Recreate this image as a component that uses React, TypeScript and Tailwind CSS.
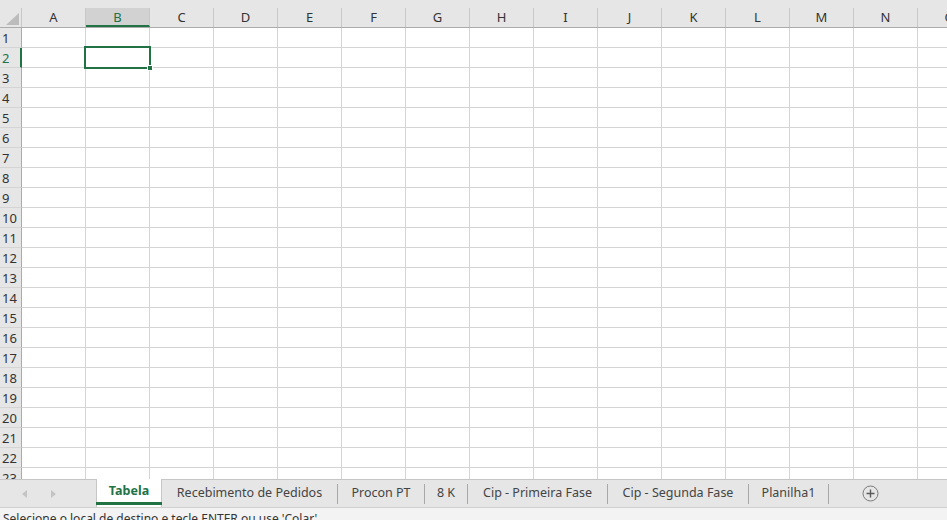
import React from "react";

const COLS = ["A", "B", "C", "D", "E", "F", "G", "H", "I", "J", "K", "L", "M", "N", "O"];
const ROWS = Array.from({ length: 23 }, (_, i) => i + 1);

const TABS: { label: string; w: string }[] = [
  { label: "Recebimento de Pedidos", w: "w-[176px]" },
  { label: "Procon PT", w: "w-[87px]" },
  { label: "8 K", w: "w-[43px]" },
  { label: "Cip - Primeira Fase", w: "w-[140px]" },
  { label: "Cip - Segunda Fase", w: "w-[141px]" },
  { label: "Planilha1", w: "w-[80px]" },
];

export default function App() {
  return (
    <div
      className="w-[947px] h-[520px] overflow-hidden bg-white flex flex-col"
      style={{ fontFamily: '"Noto Sans", "Open Sans", sans-serif' }}
    >
      {/* grid */}
      <div className="relative h-[479px] overflow-hidden shrink-0">
        {/* column header */}
        <div className="flex h-[28px] bg-[#e6e6e6] border-b border-[#ababab] pt-[8px] w-[1200px]">
          <div className="relative w-[22px] h-[19px] border-r border-[#c8c8c8] shrink-0">
            <svg className="absolute left-[6px] top-[5px]" width="13" height="12" viewBox="0 0 13 12">
              <polygon points="13,0 13,12 0,12" fill="#bcbcbc" />
            </svg>
          </div>
          {COLS.map((c) => {
            const sel = c === "B";
            return (
              <div
                key={c}
                className={
                  "w-[64px] h-[19px] shrink-0 border-r border-[#c8c8c8] flex items-center justify-center text-[13px] leading-none " +
                  (sel ? "bg-[#d2d2d2] text-[#217346] border-b-2 border-b-[#217346]" : "text-[#333]")
                }
              >
                <span className={sel ? "mt-[1px]" : ""}>{c}</span>
              </div>
            );
          })}
        </div>
        {/* rows */}
        {ROWS.map((r) => {
          const sel = r === 2;
          return (
            <div key={r} className="flex h-[20px] w-[1200px]">
              <div
                className={
                  "w-[22px] h-[20px] shrink-0 bg-[#e6e6e6] border-b border-[#d4d4d4] flex items-center pl-[2px] pt-[1px] text-[13px] leading-none " +
                  (sel ? "border-r-2 border-r-[#217346] bg-[#d2d2d2] text-[#217346]" : "border-r border-r-[#ababab] text-[#333]")
                }
              >
                {r}
              </div>
              {COLS.map((c) => (
                <div key={c} className="w-[64px] h-[20px] shrink-0 border-r border-b border-[#d4d4d4]" />
              ))}
            </div>
          );
        })}
        {/* selection */}
        <div className="absolute left-[84px] top-[46px] w-[67px] h-[23px] border-2 border-[#217346]" />
        <div className="absolute left-[147px] top-[65px] w-[6px] h-[6px] bg-[#217346] border border-white" />
      </div>

      {/* tab bar */}
      <div className="h-[29px] shrink-0 bg-[#e6e6e6] border-t border-[#c6c6c6] border-b border-b-[#d0d0d0] flex items-stretch text-[12.5px] text-[#444]">
        <div className="w-[96px] shrink-0 flex items-center">
          <svg className="ml-[22px]" width="5" height="8" viewBox="0 0 5 8">
            <polygon points="5,0 5,8 0,4" fill="#c4c4c4" />
          </svg>
          <svg className="ml-[24px]" width="5" height="8" viewBox="0 0 5 8">
            <polygon points="0,0 0,8 5,4" fill="#c4c4c4" />
          </svg>
        </div>
        <div className="w-[66px] shrink-0 bg-white border-x border-[#c6c6c6] -mt-px flex flex-col">
          <div className="flex-1 flex items-center justify-center font-bold text-[#217346] pt-[1px]">Tabela</div>
          <div className="h-[3px] bg-[#217346] mb-[2px] mx-[-1px]" />
        </div>
        {TABS.map((t) => (
          <div key={t.label} className={t.w + " shrink-0 flex items-center"}>
            <div className="flex-1 text-center whitespace-nowrap">{t.label}</div>
            <div className="w-px h-[20px] bg-[#a8a8a8]" />
          </div>
        ))}
        <div className="flex items-center ml-[33px]">
          <svg width="17" height="17" viewBox="0 0 17 17">
            <circle cx="8.5" cy="8.5" r="7.5" fill="none" stroke="#7a7a7a" strokeWidth="1" />
            <path d="M8.5 4.5v8M4.5 8.5h8" stroke="#5a5a5a" strokeWidth="1.4" />
          </svg>
        </div>
      </div>

      {/* status bar */}
      <div className="flex-1 bg-[#f3f3f3] overflow-hidden pl-[3px] pt-[3px] text-[12px] leading-[16px] text-[#333] whitespace-nowrap">
        Selecione o local de destino e tecle ENTER ou use 'Colar'
      </div>
    </div>
  );
}
